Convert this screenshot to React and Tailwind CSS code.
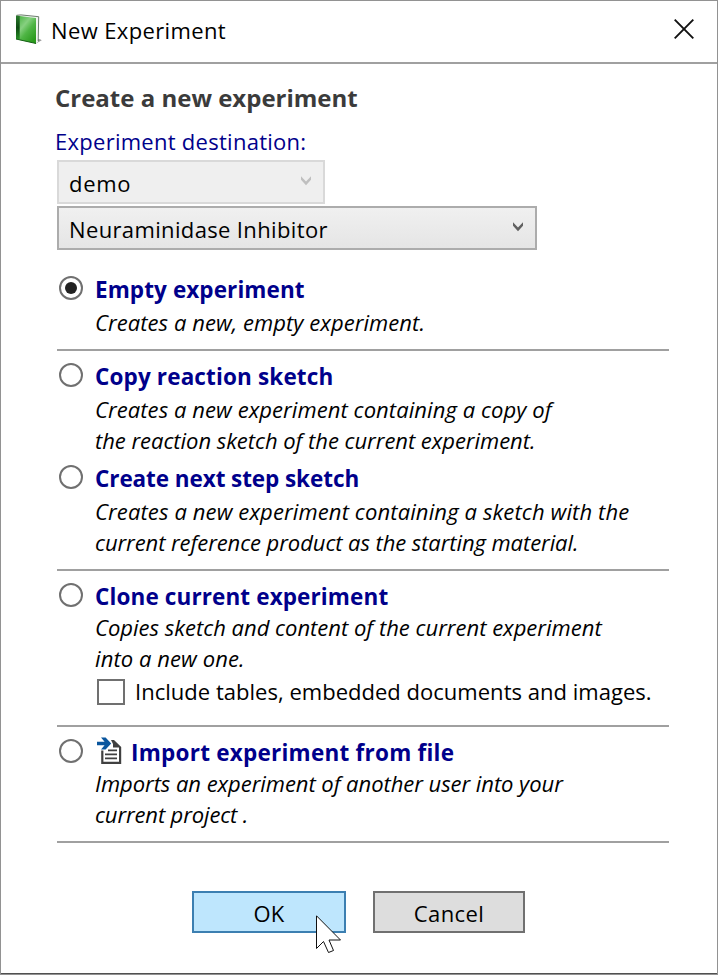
import React from "react";

function BookIcon() {
  return (
    <svg className="block shrink-0" width="28" height="32" viewBox="0 0 28 32">
      <defs>
        <linearGradient id="cover" x1="0" y1="0" x2="0.7" y2="1">
          <stop offset="0" stopColor="#4fb548" />
          <stop offset="0.35" stopColor="#86d080" />
          <stop offset="0.6" stopColor="#4fb545" />
          <stop offset="1" stopColor="#2a9a1c" />
        </linearGradient>
        <linearGradient id="spine" x1="0" y1="0" x2="0" y2="1">
          <stop offset="0" stopColor="#2a7a2c" />
          <stop offset="0.5" stopColor="#0e4a12" />
          <stop offset="1" stopColor="#2a9226" />
        </linearGradient>
      </defs>
      <path d="M21 29.5 L26.8 26.2 L25 25.2 L22 25 Z" fill="#9c9c9c" />
      <path d="M1.5 1.5 L6 1 L23.7 2.8 L23 27.5 L21 29.5 Z" fill="#f1f4f1" />
      <path d="M1.5 1.3 L6 0.9 L23.7 2.7 L23.2 27" fill="none" stroke="#5c6e5d" strokeWidth="0.9" />
      <path d="M1 1.5 L5 2 L5.5 26 L1 25 Z" fill="url(#spine)" />
      <path d="M4.7 2 L21 4 L21 29.5 L4.7 26 Z" fill="url(#cover)" />
      <path d="M1 25 L21 29.5" stroke="#156015" strokeWidth="1" />
    </svg>
  );
}

function ImportIcon() {
  return (
    <svg className="block shrink-0" width="26" height="28" viewBox="0 0 26 28">
      <path d="M14 3 H17 L24.2 10 V27 H4.2 V13.5 H6.4 V24.8 H22 V10.5 H16 V7 Z" fill="#404040" />
      <path d="M11 13.3 H20 M8 17.3 H20 M8 21.3 H20" stroke="#404040" strokeWidth="1.8" />
      <path d="M0 4.8 H7.6 L4 0.4 H8.6 L14.2 6.4 L8.6 12.4 H4 L7.6 8.2 H0 Z" fill="#0a569e" />
    </svg>
  );
}

function Chevron({ className }) {
  return (
    <svg className={className} width="12" height="10" viewBox="0 0 12 10">
      <path d="M1 0.3 L6 5.6 L11 0.3 V3.8 L6 9.2 L1 3.8 Z" fill="currentColor" />
    </svg>
  );
}

function Radio({ checked }) {
  return (
    <span className="mt-[2px] flex size-6 shrink-0 items-center justify-center rounded-full border-2 border-[#707070] bg-white">
      {checked && <span className="size-3 rounded-full bg-[#222222]" />}
    </span>
  );
}

function Option({ title, titleClass, checked, icon, gap, lines, children }) {
  return (
    <div className="flex pl-[2px]">
      <Radio checked={checked} />
      <div className="ml-3 flex flex-col whitespace-nowrap">
        <div className="flex h-[31px] items-start">
          {icon}
          <span className={"text-[22.5px]/[31px] font-bold text-[#00008b] " + titleClass}>{title}</span>
        </div>
        <div className={"italic " + (gap ? "pt-[2px]" : "")}>
          {lines.map(([text, cls]) => (
            <div key={text} className={"h-[31px] " + cls}>{text}</div>
          ))}
        </div>
        {children}
      </div>
    </div>
  );
}

function Divider({ className }) {
  return <div className={"h-[2px] w-[612px] bg-[#a0a0a0] " + className} />;
}

export default function App() {
  return (
    <div className="relative flex h-[975px] w-[718px] flex-col overflow-hidden border border-[#929292] bg-white font-['Open_Sans','Noto_Sans',sans-serif] text-[22px] leading-[31px] text-black">
      <header className="flex h-[63px] shrink-0 items-start border-b-2 border-[#a0a0a0] pl-[14px]">
        <div className="mt-[13px]"><BookIcon /></div>
        <span className="ml-[8px] mt-[14px] whitespace-nowrap tracking-[0.37px]">New Experiment</span>
        <svg className="ml-auto mr-[23px] mt-[18px]" width="20" height="20" viewBox="0 0 20 20">
          <path d="M0.7 0.7 L19.3 19.3 M19.3 0.7 L0.7 19.3" stroke="#111" strokeWidth="1.9" />
        </svg>
      </header>
      <main className="flex grow flex-col border-b border-[#505050] pl-14 pt-[19px]">
        <h1 className="-ml-[2px] h-[31px] whitespace-nowrap text-2xl/[30px] font-bold text-[#3b3b3b]">Create a new experiment</h1>
        <div className="-ml-[2px] mt-3 h-[31px] whitespace-nowrap tracking-[0.27px] text-[#00008b]">Experiment destination:</div>
        <div className="mt-[3px] flex h-11 w-[268px] items-start justify-between border-2 border-[#d9d9d9] bg-[#efefef] pl-[10px] pr-[11px] pt-[6px]">
          <span className="tracking-[0.7px]">demo</span>
          <Chevron className="mt-[8px] text-[#bfbfbf]" />
        </div>
        <div className="mt-[2px] flex h-11 w-[480px] items-start justify-between border-2 border-[#acacac] bg-linear-to-b from-[#f0f0f0] to-[#e5e5e5] pl-[10px] pr-[11px] pt-[6px]">
          <span className="tracking-[0.36px]">Neuraminidase Inhibitor</span>
          <Chevron className="mt-[8px] text-[#606060]" />
        </div>
        <div className="mt-6">
          <Option checked gap title="Empty experiment" titleClass="tracking-[0.09px]" lines={[["Creates a new, empty experiment.", "tracking-[0.06px]"]]} />
        </div>
        <Divider className="mb-[10px] mt-[11px]" />
        <Option
          gap
          title="Copy reaction sketch"
          titleClass="tracking-[0.14px]"
          lines={[
            ["Creates a new experiment containing a copy of", "tracking-[0.07px]"],
            ["the reaction sketch of the current experiment.", "tracking-[-0.04px]"],
          ]}
        />
        <div className="mt-[7px]">
          <Option
            gap
            title="Create next step sketch"
            titleClass="tracking-[-0.08px]"
            lines={[
              ["Creates a new experiment containing a sketch with the", "tracking-[0.12px]"],
              ["current reference product as the starting material.", "tracking-[-0.08px]"],
            ]}
          />
        </div>
        <Divider className="mb-[10px] mt-[11px]" />
        <Option
          title="Clone current experiment"
          titleClass="tracking-[0.12px]"
          lines={[
            ["Copies sketch and content of the current experiment", ""],
            ["into a new one.", "tracking-[0.08px]"],
          ]}
        >
          <label className="mt-[2px] flex h-[31px] items-start pl-[2px]">
            <span className="mt-[3px] h-[26px] w-7 shrink-0 border-2 border-[#707070] bg-white" />
            <span className="ml-[10px] tracking-[0.02px]">Include tables, embedded documents and images.</span>
          </label>
        </Option>
        <Divider className="mb-[10px] mt-[18px]" />
        <Option
          title="Import experiment from file"
          titleClass="ml-[8px] tracking-[0.24px]"
          icon={<div className="ml-[2px]"><ImportIcon /></div>}
          lines={[
            ["Imports an experiment of another user into your", "tracking-[-0.05px]"],
            ["current project .", "tracking-[-0.13px]"],
          ]}
        />
        <Divider className="mt-[11px]" />
        <div className="mt-12 flex gap-[27px] pl-[135px]">
          <button className="h-[42px] w-[154px] border-2 border-[#3c7fb1] bg-[#bee6fd] pt-[3px] tracking-[0.3px]">OK</button>
          <button className="h-[42px] w-[152px] border-2 border-[#707070] bg-[#dddddd] pt-[3px] tracking-[0.4px]">Cancel</button>
        </div>
      </main>
      <svg className="absolute left-[315px] top-[914px]" width="27" height="40" viewBox="0 0 27 40">
        <path d="M0.5 0.8 V33.5 L7.5 26.5 L12.5 37.5 L17.5 35.5 L13 25 H24.5 Z" fill="#fff" stroke="#111" strokeWidth="1" />
      </svg>
    </div>
  );
}
